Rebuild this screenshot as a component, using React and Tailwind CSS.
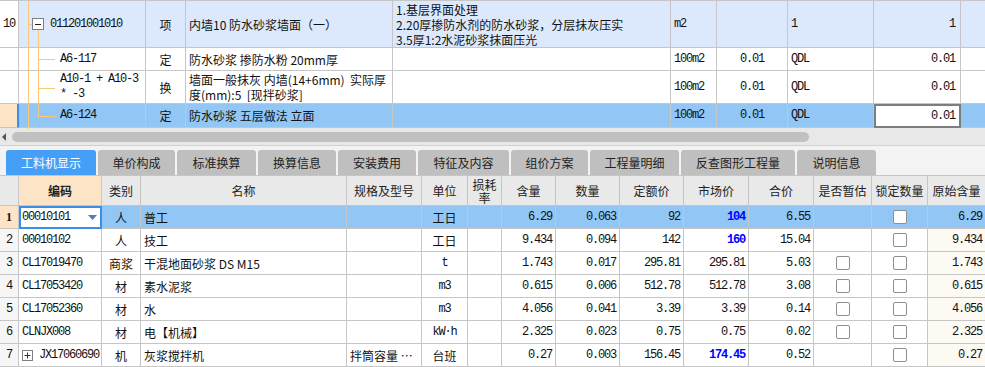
import React from 'react';

const MONO = "font-['Liberation_Mono',monospace] text-[12px] tracking-[-1.2px]";
const GRID = 'border-r border-b border-[#c6c6c6]';

const TOPW = ['w-[19px]', 'w-[127px]', 'w-[40px]', 'w-[207px]', 'w-[278px]', 'w-[46px]', 'w-[71px]', 'w-[86px]', 'w-[87px]', 'w-[24px]'];
const BOTW = ['w-[19px]', 'w-[83px]', 'w-[39px]', 'w-[206px]', 'w-[75px]', 'w-[46px]', 'w-[34px]', 'w-[54px]', 'w-[64px]', 'w-[64px]', 'w-[65px]', 'w-[65px]', 'w-[58px]', 'w-[56px]', 'w-[57px]'];

const TABS = [
  ['工料机显示', 'w-[90px]'],
  ['单价构成', 'w-[77px]'],
  ['标准换算', 'w-[79px]'],
  ['换算信息', 'w-[78px]'],
  ['安装费用', 'w-[78px]'],
  ['特征及内容', 'w-[91px]'],
  ['组价方案', 'w-[77px]'],
  ['工程量明细', 'w-[89px]'],
  ['反查图形工程量', 'w-[114px]'],
  ['说明信息', 'w-[79px]'],
];

// code, type, name, spec, unit, 含量, 数量, 定额价, 市场价, 合价, 暂估 checkbox, 原始含量, market in blue
const ROWS = [
  ['00010101', '人', '普工', '', '工日', '6.29', '0.063', '92', '104', '6.55', false, '6.29', true],
  ['00010102', '人', '技工', '', '工日', '9.434', '0.094', '142', '160', '15.04', false, '9.434', true],
  ['CL17019470', '商浆', '干混地面砂浆 DS M15', '', 't', '1.743', '0.017', '295.81', '295.81', '5.03', true, '1.743', false],
  ['CL17053420', '材', '素水泥浆', '', 'm3', '0.615', '0.006', '512.78', '512.78', '3.08', true, '0.615', false],
  ['CL17052360', '材', '水', '', 'm3', '4.056', '0.041', '3.39', '3.39', '0.14', true, '4.056', false],
  ['CLNJX008', '材', '电【机械】', '', 'kW·h', '2.325', '0.023', '0.75', '0.75', '0.02', true, '2.325', false],
  ['JX17060690', '机', '灰浆搅拌机', '拌筒容量 …', '台班', '0.27', '0.003', '156.45', '174.45', '0.52', false, '0.27', true],
];

function Cell({ w, a = 'items-center', b = GRID, className = '', children }) {
  return (
    <div className={`${w} shrink-0 flex overflow-hidden whitespace-pre ${a} ${b} ${className}`}>
      {children}
    </div>
  );
}

function Check() {
  return <div className="w-[14px] h-[14px] bg-white border border-[#8f8f8f] rounded-[2px]" />;
}

function TreeLines() {
  return (
    <svg className="absolute left-0 top-0 pointer-events-none" width="146" height="128">
      <path
        d="M28.5 0V128M28 23.5H32M38.5 29V115.5M38 58.5H55M38 87.5H55M38 115.5H55"
        stroke="#fcc776"
        fill="none"
      />
      <rect x="32.5" y="17.5" width="11" height="11" fill="#fff" stroke="#7f7f7f" />
      <path d="M35 23.5H41" stroke="#222" />
    </svg>
  );
}

function TopTable() {
  return (
    <div className="relative border-t border-[#c6c6c6]">
      {/* 清单行 */}
      <div className="flex h-[47px] bg-[#dce9fc]">
        <Cell w={TOPW[0]} a={`items-center justify-center bg-white ${MONO}`}>10</Cell>
        <Cell w={TOPW[1]} className={`pl-[31px] ${MONO}`}>011201001010</Cell>
        <Cell w={TOPW[2]} a="items-center justify-center">项</Cell>
        <Cell w={TOPW[3]} className="pl-[3px]">内墙10 防水砂浆墙面（一）</Cell>
        <Cell w={TOPW[4]} a="flex-col justify-start" className="pl-[3px] pt-[1px] leading-[15px]">
          <div>1.基层界面处理</div>
          <div>2.20厚掺防水剂的防水砂浆，分层抹灰压实</div>
          <div>3.5厚1:2水泥砂浆抹面压光</div>
        </Cell>
        <Cell w={TOPW[5]} className={`pl-[3px] ${MONO}`}>m2</Cell>
        <Cell w={TOPW[6]} />
        <Cell w={TOPW[7]} className={`pl-[3px] ${MONO}`}>1</Cell>
        <Cell w={TOPW[8]} a="items-center justify-end" className={`pr-[5px] ${MONO}`}>1</Cell>
        <Cell w={TOPW[9]} b="border-b border-[#c6c6c6]" />
      </div>

      <div className="flex h-[23px] bg-white">
        <Cell w={TOPW[0]} />
        <Cell w={TOPW[1]} className={`pl-[41px] ${MONO}`}>A6-117</Cell>
        <Cell w={TOPW[2]} a="items-center justify-center">定</Cell>
        <Cell w={TOPW[3]} className="pl-[3px]">防水砂浆 掺防水粉 20mm厚</Cell>
        <Cell w={TOPW[4]} />
        <Cell w={TOPW[5]} className={`pl-[3px] ${MONO}`}>100m2</Cell>
        <Cell w={TOPW[6]} a="items-center justify-center" className={MONO}>0.01</Cell>
        <Cell w={TOPW[7]} className={`pl-[3px] ${MONO}`}>QDL</Cell>
        <Cell w={TOPW[8]} a="items-center justify-end" className={`pr-[5px] ${MONO}`}>0.01</Cell>
        <Cell w={TOPW[9]} b="border-b border-[#c6c6c6]" />
      </div>

      <div className="flex h-[33px] bg-white">
        <Cell w={TOPW[0]} />
        <Cell w={TOPW[1]} a="flex-col justify-center" className={`pl-[41px] leading-[15px] ${MONO}`}>
          <div>A10-1 + A10-3</div>
          <div>* -3</div>
        </Cell>
        <Cell w={TOPW[2]} a="items-center justify-center">换</Cell>
        <Cell w={TOPW[3]} a="flex-col justify-center" className="pl-[3px] leading-[15px]">
          <div>墙面一般抹灰 内墙(14+6mm)  实际厚</div>
          <div>度(mm):5  [现拌砂浆]</div>
        </Cell>
        <Cell w={TOPW[4]} />
        <Cell w={TOPW[5]} className={`pl-[3px] ${MONO}`}>100m2</Cell>
        <Cell w={TOPW[6]} a="items-center justify-center" className={MONO}>0.01</Cell>
        <Cell w={TOPW[7]} className={`pl-[3px] ${MONO}`}>QDL</Cell>
        <Cell w={TOPW[8]} a="items-center justify-end" className={`pr-[5px] ${MONO}`}>0.01</Cell>
        <Cell w={TOPW[9]} b="border-b border-[#c6c6c6]" />
      </div>

      <div className="flex h-[24px] bg-[#92c7f5]">
        <Cell w={TOPW[0]} b="border-r-2 border-r-[#3d8fea] border-b border-b-[#c6c6c6]" className="bg-[#fde4c6]" />
        <Cell w={TOPW[1]} className={`pl-[41px] ${MONO}`}>A6-124</Cell>
        <Cell w={TOPW[2]} a="items-center justify-center">定</Cell>
        <Cell w={TOPW[3]} className="pl-[3px]">防水砂浆 五层做法 立面</Cell>
        <Cell w={TOPW[4]} />
        <Cell w={TOPW[5]} className={`pl-[3px] ${MONO}`}>100m2</Cell>
        <Cell w={TOPW[6]} a="items-center justify-center" className={MONO}>0.01</Cell>
        <Cell w={TOPW[7]} className={`pl-[3px] ${MONO}`}>QDL</Cell>
        <Cell w={TOPW[8]} a="items-center justify-end" b="border-2 border-[#7d7d7d]" className={`bg-white pr-[4px] ${MONO}`}>0.01</Cell>
        <Cell w={TOPW[9]} b="border-b border-[#c6c6c6]" />
      </div>

      <TreeLines />
    </div>
  );
}

function ScrollBar() {
  return (
    <div className="h-[18px] flex items-center bg-[#e8e8e8] border-b border-[#d2d2d2]">
      <div className="ml-[2px] w-0 h-0 border-y-[4px] border-y-transparent border-r-[4px] border-r-[#555]" />
      <div className="ml-[6px] w-[797px] h-[10px] rounded-full bg-[#c1c1c1]" />
    </div>
  );
}

function Tabs() {
  return (
    <div className="h-[29px] bg-[#f3f3f3] pl-[6px] flex items-end gap-[2px]">
      {TABS.map(([label, w], i) => (
        <div
          key={label}
          className={`${w} h-[25px] rounded-t-[3px] flex items-center justify-center text-[12px] ${
            i === 0 ? 'bg-[#469ff6] text-white' : 'bg-[#bfbfbf] text-[#222]'
          }`}
        >
          {label}
        </div>
      ))}
    </div>
  );
}

function Header() {
  const heads = ['类别', '名称', '规格及型号', '单位'];
  const tail = ['含量', '数量', '定额价', '市场价', '合价', '是否暂估', '锁定数量', '原始含量'];
  return (
    <div className="flex h-[30px] bg-[#e9e9e9] text-[#222]">
      <Cell w={BOTW[0]} />
      <Cell w={BOTW[1]} a="items-center justify-center" className="bg-[#fde4c6] font-bold">编码</Cell>
      {heads.map((h, i) => (
        <Cell key={h} w={BOTW[i + 2]} a="items-center justify-center">{h}</Cell>
      ))}
      <Cell w={BOTW[6]} a="flex-col items-center justify-center" className="leading-[13px]">
        <div>损耗</div>
        <div>率</div>
      </Cell>
      {tail.map((h, i) => (
        <Cell key={h} w={BOTW[i + 7]} a="items-center justify-center" b={i === 7 ? 'border-b border-[#c6c6c6]' : GRID}>{h}</Cell>
      ))}
    </div>
  );
}

function DataRow({ r, i }) {
  const sel = i === 0;
  const [code, cat, name, spec, unit, qty, amt, base, market, total, est, orig, blue] = r;
  const num = 'items-center justify-end';
  return (
    <div className={`flex h-[23px] ${sel ? 'bg-[#92c7f5]' : 'bg-white'}`}>
      <Cell
        w={BOTW[0]}
        a="items-center justify-center"
        className={sel ? "bg-[#fde4c6] font-bold font-['Liberation_Serif',serif] text-[12px]" : `bg-[#f6f6f6] ${MONO}`}
      >
        {i + 1}
      </Cell>
      {sel ? (
        <Cell w={BOTW[1]} b="border-2 border-[#3a8ee8]" className={`bg-white pl-[1px] ${MONO}`}>
          <span>{code}</span>
          <svg className="ml-auto mr-[3px]" width="9" height="5">
            <path d="M0 0H9L4.5 5Z" fill="#4d7fb8" />
          </svg>
        </Cell>
      ) : i === 6 ? (
        <Cell w={BOTW[1]} className={`pl-[3px] ${MONO}`}>
          <svg className="mr-[6px] shrink-0" width="11" height="11">
            <rect x="0.5" y="0.5" width="10" height="10" fill="#fff" stroke="#7f7f7f" />
            <path d="M2.5 5.5H8.5M5.5 2.5V8.5" stroke="#333" />
          </svg>
          <span>{code}</span>
        </Cell>
      ) : (
        <Cell w={BOTW[1]} className={`pl-[3px] ${MONO}`}>{code}</Cell>
      )}
      <Cell w={BOTW[2]} a="items-center justify-center">{cat}</Cell>
      <Cell w={BOTW[3]} className="pl-[3px]">{name}</Cell>
      <Cell w={BOTW[4]} className="pl-[3px]">{spec}</Cell>
      <Cell w={BOTW[5]} a="items-center justify-center" className={/^[a-zA-Z0-9·]+$/.test(unit) ? MONO : ''}>{unit}</Cell>
      <Cell w={BOTW[6]} />
      <Cell w={BOTW[7]} a={num} className={`pr-[3px] ${MONO}`}>{qty}</Cell>
      <Cell w={BOTW[8]} a={num} className={`pr-[3px] ${MONO}`}>{amt}</Cell>
      <Cell w={BOTW[9]} a={num} className={`pr-[3px] ${MONO}`}>{base}</Cell>
      <Cell w={BOTW[10]} a={num} className={`pr-[3px] ${MONO} ${blue ? 'font-bold text-[#0000ff]' : ''}`}>{market}</Cell>
      <Cell w={BOTW[11]} a={num} className={`pr-[3px] ${MONO}`}>{total}</Cell>
      <Cell w={BOTW[12]} a="items-center justify-center">{est && <Check />}</Cell>
      <Cell w={BOTW[13]} a="items-center justify-center"><Check /></Cell>
      <Cell
        w={BOTW[14]}
        a={num}
        b="border-b border-[#c6c6c6]"
        className={`pr-[3px] ${MONO} ${sel ? '' : 'bg-[#fdf9f3]'}`}
      >
        {orig}
      </Cell>
    </div>
  );
}

export default function App() {
  return (
    <div className="w-[985px] h-[367px] overflow-hidden bg-white text-[12px] leading-[15px] text-[#111] font-['Noto_Sans_CJK_SC',sans-serif]">
      <TopTable />
      <ScrollBar />
      <Tabs />
      <div className="border-t border-[#c6c6c6]">
        <Header />
        {ROWS.map((r, i) => (
          <DataRow key={r[0]} r={r} i={i} />
        ))}
      </div>
    </div>
  );
}
